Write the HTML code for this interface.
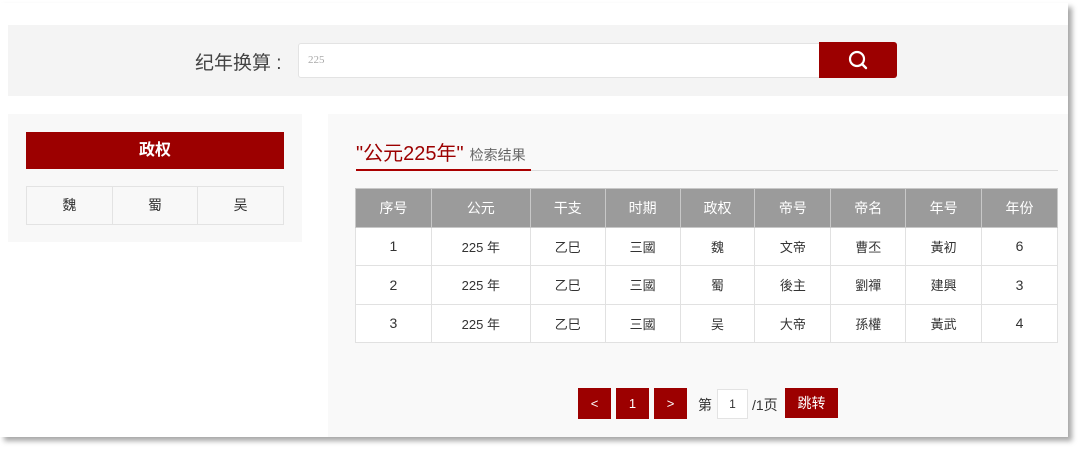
<!DOCTYPE html>
<html><head><meta charset="utf-8"><style>
*{box-sizing:border-box;margin:0;padding:0}
body{width:1080px;height:453px;background:#fff;font-family:"Liberation Sans","Noto Sans CJK SC",sans-serif;position:relative;overflow:hidden}
.card{position:absolute;left:0;top:3px;width:1068px;height:434px;background:#fff;box-shadow:4px 4px 5px rgba(0,0,0,.35)}
.abs{position:absolute}
.band{left:8px;top:25px;width:1060px;height:71px;background:#f4f4f4}
.lbl{left:195px;top:48px;font-size:19px;color:#444}
.inp{left:298px;top:43px;width:522px;height:35px;background:#fff;border:1px solid #e3e3e3;border-radius:3px 0 0 3px;font-size:11px;color:#aaa;padding:10px 9px;font-family:"Liberation Serif",serif}
.btn{left:819px;top:42px;width:78px;height:36px;background:#9c0000;border-radius:0 3px 3px 0}
.lp{left:8px;top:114px;width:294px;height:128px;background:#f8f8f8}
.lh{left:26px;top:132px;width:258px;height:37px;background:#9c0000;color:#fff;font-weight:bold;font-size:16px;text-align:center;line-height:37px}
.lt{left:26px;top:186px;width:258px;height:39px;display:flex;border:1px solid #e3e3e3}
.lt div{flex:1;text-align:center;line-height:37px;font-size:14px;color:#333;border-right:1px solid #e3e3e3}
.lt div:last-child{border:none}
.rp{left:328px;top:114px;width:740px;height:323px;background:#f9f9f9}
.tt{left:356px;top:137px;font-size:20px;color:#9c0000}
.tt span{font-size:14px;color:#666;margin-left:6px}
.gl{left:356px;top:170px;width:702px;height:1px;background:#ddd}
.rl{left:356px;top:169px;width:175px;height:2px;background:#a00}
table{position:absolute;left:355px;top:188px;border-collapse:collapse;width:703px;font-size:13px;color:#333}
td,th{border:1px solid #e1e1e1;text-align:center;height:38.5px;font-weight:normal;background:#fff}
th{background:#9b9b9b;color:#fff;font-size:14px;border-color:#c8c8c8}
.pb{top:388px;height:31px;background:#9c0000;color:#fff;font-size:13px;text-align:center;line-height:31px}
.pt{top:395px;font-size:14px;color:#333}
</style></head><body>
<div class="card"></div>
<div class="abs band"></div>
<div class="abs lbl">纪年换算 :</div>
<div class="abs inp">225</div>
<div class="abs btn"><svg width="78" height="36"><circle cx="38" cy="17" r="7" fill="none" stroke="#fff" stroke-width="2.2"/><line x1="43" y1="22" x2="47" y2="26" stroke="#fff" stroke-width="2.4" stroke-linecap="round"/></svg></div>
<div class="abs lp"></div>
<div class="abs lh">政权</div>
<div class="abs lt"><div>魏</div><div>蜀</div><div>吴</div></div>
<div class="abs rp"></div>
<div class="abs gl"></div><div class="abs rl"></div>
<div class="abs tt">"公元225年"<span>检索结果</span></div>
<table>
<colgroup><col style="width:76px"><col style="width:99px"><col style="width:75px"><col style="width:75px"><col style="width:75px"><col style="width:76px"><col style="width:75px"><col style="width:76px"><col style="width:76px"></colgroup>
<tr><th>序号</th><th>公元</th><th>干支</th><th>时期</th><th>政权</th><th>帝号</th><th>帝名</th><th>年号</th><th>年份</th></tr>
<tr><td style="font-size:14px">1</td><td>225 年</td><td>乙巳</td><td>三國</td><td>魏</td><td>文帝</td><td>曹丕</td><td>黃初</td><td style="font-size:14px">6</td></tr>
<tr><td style="font-size:14px">2</td><td>225 年</td><td>乙巳</td><td>三國</td><td>蜀</td><td>後主</td><td>劉禪</td><td>建興</td><td style="font-size:14px">3</td></tr>
<tr><td style="font-size:14px">3</td><td>225 年</td><td>乙巳</td><td>三國</td><td>吴</td><td>大帝</td><td>孫權</td><td>黃武</td><td style="font-size:14px">4</td></tr>
</table>
<div class="abs pb" style="left:578px;width:33px">&lt;</div>
<div class="abs pb" style="left:616px;width:33px">1</div>
<div class="abs pb" style="left:654px;width:33px">&gt;</div>
<div class="abs pt" style="left:698px">第</div>
<div class="abs" style="left:717px;top:389px;width:31px;height:30px;background:#fff;border:1px solid #e3e3e3;text-align:center;line-height:28px;font-size:12px;color:#333">1</div>
<div class="abs pt" style="left:752px">/1页</div>
<div class="abs pb" style="left:785px;width:53px;height:30px;line-height:30px;font-size:14px">跳转</div>
</body></html>
